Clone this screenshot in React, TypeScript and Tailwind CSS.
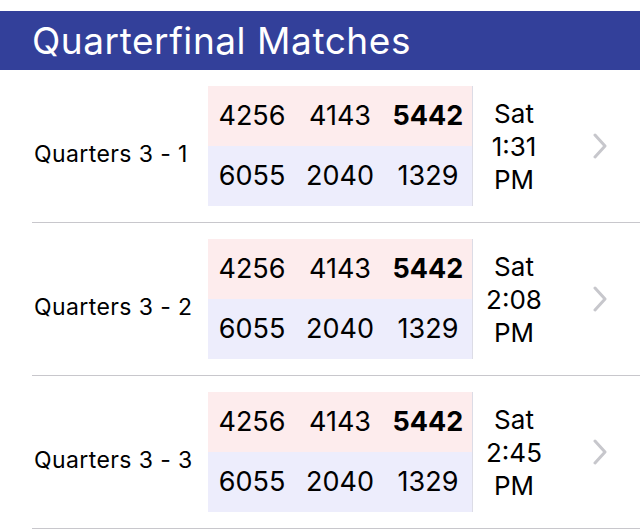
const matches = [
  { name: "Quarters 3 - 1", red: ["4256", "4143", "5442"], blue: ["6055", "2040", "1329"], day: "Sat", time: "1:31", ampm: "PM" },
  { name: "Quarters 3 - 2", red: ["4256", "4143", "5442"], blue: ["6055", "2040", "1329"], day: "Sat", time: "2:08", ampm: "PM" },
  { name: "Quarters 3 - 3", red: ["4256", "4143", "5442"], blue: ["6055", "2040", "1329"], day: "Sat", time: "2:45", ampm: "PM" },
];

const Chevron = () => (
  <svg width="16" height="26" viewBox="0 0 16 26" fill="none">
    <path d="M3 2 L13 13 L3 24" stroke="#c7c7cc" strokeWidth="3" strokeLinecap="round" strokeLinejoin="round" />
  </svg>
);

const MatchRow = ({ m }: { m: (typeof matches)[number] }) => (
  <div className="ml-8 flex h-[153px] items-center border-b border-[#c8c7cc]">
    <div className="mt-[17px] w-[176px] pl-[2px] text-[23px] leading-none tracking-[0.4px] text-black">{m.name}</div>
    <div className="flex w-[265px] flex-col border-r border-[#dcdce6]">
      <div className="grid h-[60px] grid-cols-3 items-center bg-[#fdeced] text-[27px]">
        {m.red.map((s, i) => (
          <span key={i} className={i === 2 ? "text-center font-bold" : "text-center"}>
            {s}
          </span>
        ))}
      </div>
      <div className="grid h-[60px] grid-cols-3 items-center bg-[#ededfc] text-[27px]">
        {m.blue.map((s, i) => (
          <span key={i} className="text-center">
            {s}
          </span>
        ))}
      </div>
    </div>
    <div className="flex w-[82px] flex-col items-center text-[26px] leading-[33px]">
      <span>{m.day}</span>
      <span>{m.time}</span>
      <span>{m.ampm}</span>
    </div>
    <div className="ml-[37px] flex items-center">
      <Chevron />
    </div>
  </div>
);

export default function App() {
  return (
    <div className="h-[530px] w-[640px] overflow-hidden bg-white font-['Inter',sans-serif] text-black">
      <div className="mt-[11px] flex h-[59px] items-center bg-[#33409a] pl-[32px]">
        <h1 className="text-[37px] font-normal leading-none tracking-[0.55px] text-white">Quarterfinal Matches</h1>
      </div>
      {matches.map((m) => (
        <MatchRow key={m.name} m={m} />
      ))}
    </div>
  );
}
